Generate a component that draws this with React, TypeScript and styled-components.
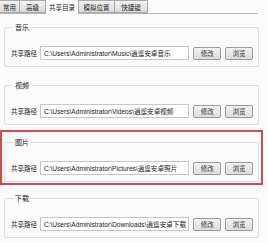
import React from 'react'
import styled, { createGlobalStyle } from 'styled-components'

const GlobalStyle = createGlobalStyle`
  html, body {
    margin: 0;
    padding: 0;
    background: #fafafa;
  }
  body {
    font-family: "Noto Sans CJK SC", "Liberation Sans", sans-serif;
    color: #222;
  }
`

type TabProps = {
  active?: boolean
  width: number
}

const Page = styled.div`
  width: 268px;
  height: 243px;
  overflow: hidden;
`

const TabBar = styled.div`
  display: flex;
  align-items: flex-end;
  height: 13px;
  margin-right: 10px;
  border-bottom: 1px solid #b4b4b4;
`

const Tab = styled.div<TabProps>(({ active, width }) => ({
  boxSizing: 'border-box',
  width: `${width}px`,
  height: active ? '15px' : '13px',
  marginBottom: active ? '-1px' : '0',
  display: 'flex',
  alignItems: 'center',
  justifyContent: 'center',
  fontSize: '6.5px',
  color: '#222',
  background: active ? '#fdfdfd' : 'linear-gradient(#f2f2f2, #dadada)',
  border: '1px solid #a9a9a9',
  borderBottom: active ? 'none' : '1px solid #a9a9a9',
  marginLeft: '-1px',
  whiteSpace: 'nowrap',
}))

const Content = styled.div`
  display: flex;
  flex-direction: column;
  padding: 8px 9px 0 4px;
`

const Group = styled.fieldset<{ gap?: number }>`
  margin: ${(p) => p.gap ?? 0}px 0 0 0;
  padding: 14px 5px 6px 6px;
  border: 1px solid #dcdfe2;
  border-radius: 2px;
  min-width: 0;
`

const Legend = styled.legend`
  font-size: 7px;
  line-height: 10px;
  padding: 0 2px;
  margin-left: 2px;
  color: #222;
`

const Highlight = styled.div`
  margin: 5px -4px 0 -4px;
  padding: 5px 2px 1px 2px;
  border: 2px solid #d24a4e;
`

const Row = styled.div`
  display: flex;
  align-items: center;
  height: 14px;
`

const RowLabel = styled.span`
  width: 29px;
  font-size: 6.5px;
  color: #222;
  white-space: nowrap;
`

const PathInput = styled.div`
  box-sizing: border-box;
  width: 150px;
  height: 14px;
  display: flex;
  align-items: center;
  padding-left: 3px;
  background: #fff;
  border: 1px solid #c4c8cc;
  font-family: "Liberation Sans", "Noto Sans CJK SC", sans-serif;
  font-size: 6.6px;
  color: #222;
  white-space: nowrap;
  overflow: hidden;
`

const Button = styled.div`
  box-sizing: border-box;
  width: 28px;
  height: 13px;
  margin-left: 4px;
  display: flex;
  align-items: center;
  justify-content: center;
  font-size: 6.5px;
  color: #333;
  background: linear-gradient(#f3f3f3, #dcdcdc);
  border: 1px solid #9a9a9a;
  border-radius: 2px;
`

const tabs = [
  { label: '常用', width: 21 },
  { label: '高级', width: 27 },
  { label: '共享目录', width: 34, active: true },
  { label: '模拟位置', width: 37 },
  { label: '快捷键', width: 34 },
]

const folders = [
  { title: '音乐', path: 'C:\\Users\\Administrator\\Music\\逍遥安卓音乐' },
  { title: '视频', path: 'C:\\Users\\Administrator\\Videos\\逍遥安卓视频' },
  { title: '图片', path: 'C:\\Users\\Administrator\\Pictures\\逍遥安卓照片', highlight: true },
  { title: '下载', path: 'C:\\Users\\Administrator\\Downloads\\逍遥安卓下载' },
]

const FolderGroup = ({ title, path, gap }: { title: string; path: string; gap?: number }) => (
  <Group gap={gap}>
    <Legend>{title}</Legend>
    <Row>
      <RowLabel>共享路径</RowLabel>
      <PathInput>{path}</PathInput>
      <Button>修改</Button>
      <Button>浏览</Button>
    </Row>
  </Group>
)

export default function App() {
  return (
    <Page>
      <GlobalStyle />
      <TabBar>
        {tabs.map((t) => (
          <Tab key={t.label} active={t.active} width={t.width}>
            {t.label}
          </Tab>
        ))}
      </TabBar>
      <Content>
        {folders.map((f, i) =>
          f.highlight ? (
            <Highlight key={f.title}>
              <FolderGroup title={f.title} path={f.path} />
            </Highlight>
          ) : (
            <FolderGroup key={f.title} title={f.title} path={f.path} gap={i === 0 ? 0 : i === 1 ? 13 : 8} />
          )
        )}
      </Content>
    </Page>
  )
}
